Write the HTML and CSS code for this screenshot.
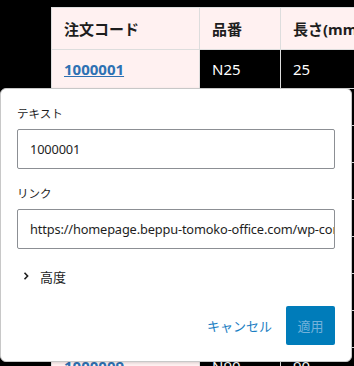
FILE: index.html
```html
<!DOCTYPE html>
<html lang="ja">
<head>
  <meta charset="UTF-8" />
  <meta name="viewport" content="width=device-width, initial-scale=1.0" />
  <title>リンク編集</title>
  <link rel="stylesheet" href="styles.css">
</head>
<body>
  <!-- Table behind the popover -->
  <div class="table-wrap">
    <table class="order-table">
      <thead>
        <tr>
          <th class="col-code">注文コード</th>
          <th class="col-part">品番</th>
          <th class="col-len">長さ(mm)</th>
        </tr>
      </thead>
      <tbody>
        <tr class="first-row">
          <td class="code"><a href="#">1000001</a></td>
          <td>N25</td>
          <td>25</td>
        </tr>
        <!-- rows hidden under the popover -->
        <tr><td class="code"></td><td></td><td></td></tr>
        <tr><td class="code"></td><td></td><td></td></tr>
        <tr><td class="code"></td><td></td><td></td></tr>
        <tr><td class="code"></td><td></td><td></td></tr>
        <tr><td class="code"></td><td></td><td></td></tr>
        <tr><td class="code"></td><td></td><td></td></tr>
        <tr><td class="code"></td><td></td><td></td></tr>
        <tr><td class="code"><a href="#">1000009</a></td><td>N90</td><td>90</td></tr>
      </tbody>
    </table>
  </div>

  <!-- Link edit popover -->
  <div class="popover">
    <div class="field">
      <label class="field-label">テキスト</label>
      <div class="field-input">1000001</div>
    </div>
    <div class="field">
      <label class="field-label">リンク</label>
      <div class="field-input">https://homepage.beppu-tomoko-office.com/wp-content/uploads</div>
    </div>
    <div class="advanced">
      <svg class="chevron" width="8" height="10" viewBox="0 0 8 10">
        <path d="M2.5 1.8 L5.6 5 L2.5 8.2" fill="none" stroke="#1e1e1e" stroke-width="1.6"/>
      </svg>
      <span>高度</span>
    </div>
    <div class="actions">
      <button class="btn-cancel">キャンセル</button>
      <button class="btn-apply" disabled>適用</button>
    </div>
  </div>
</body>
</html>
```

FILE: styles.css
```css
/* Base */
body {
  margin: 0;
  background: #000;
  font-family: "Noto Sans", "Noto Sans CJK JP", sans-serif;
  color: #1e1e1e;
  overflow: hidden;
  height: 366px;
}

/* Table */
.table-wrap {
  padding: 7px 0 0 51px;
}
.order-table {
  border-collapse: collapse;
  width: 420px;
  table-layout: fixed;
}
.order-table th,
.order-table td {
  border: 1px solid #ddd;
  padding: 0 12px;
  text-align: left;
  font-size: 15px;
  white-space: nowrap;
  overflow: hidden;
}
.order-table th {
  height: 41px;
  background: #fff1f1;
  color: #1e1e1e;
  font-weight: 700;
}
.col-code { width: 123px; }
.col-part { width: 56px; }
.order-table td {
  height: 36px;
  color: #fff;
  background: #000;
}
.order-table .first-row td {
  height: 38px;
}
.order-table td.code {
  background: #fff1f1;
}
.order-table td.code a {
  color: #2e71b3;
  font-weight: 700;
  text-decoration: underline;
}

/* Popover */
.popover {
  position: absolute;
  left: 0;
  top: 88px;
  width: 352px;
  height: 274px;
  box-sizing: border-box;
  background: #fff;
  border: 1px solid #c8c8c8;
  border-radius: 6px;
  box-shadow: 0 1px 3px rgba(0, 0, 0, 0.15);
  padding: 17px 16px 16px;
  display: flex;
  flex-direction: column;
}
.field {
  display: flex;
  flex-direction: column;
  margin-bottom: 17px;
}
.field-label {
  font-size: 11.5px;
  line-height: 16px;
  color: #1e1e1e;
  margin-bottom: 7px;
}
.field-input {
  height: 40px;
  box-sizing: border-box;
  border: 1px solid #8c8f94;
  border-radius: 2px;
  padding: 0 12px;
  font-size: 12.8px;
  letter-spacing: -0.15px;
  line-height: 38px;
  color: #1e1e1e;
  white-space: nowrap;
  overflow: hidden;
}

.advanced {
  display: flex;
  align-items: center;
  gap: 10px;
  padding-left: 5px;
  margin-top: 1px;
  height: 18px;
  font-size: 13px;
}
.chevron {
  display: block;
}

.actions {
  margin-top: auto;
  display: flex;
  justify-content: flex-end;
  align-items: center;
  gap: 14px;
}
.btn-cancel {
  border: none;
  background: none;
  padding: 0;
  font-family: inherit;
  font-size: 13px;
  color: #1a7ec3;
}
.btn-apply {
  width: 49px;
  height: 39px;
  border: none;
  border-radius: 2px;
  background: #007cba;
  color: #73b2da;
  font-family: inherit;
  font-size: 13px;
  padding: 0;
}
```
